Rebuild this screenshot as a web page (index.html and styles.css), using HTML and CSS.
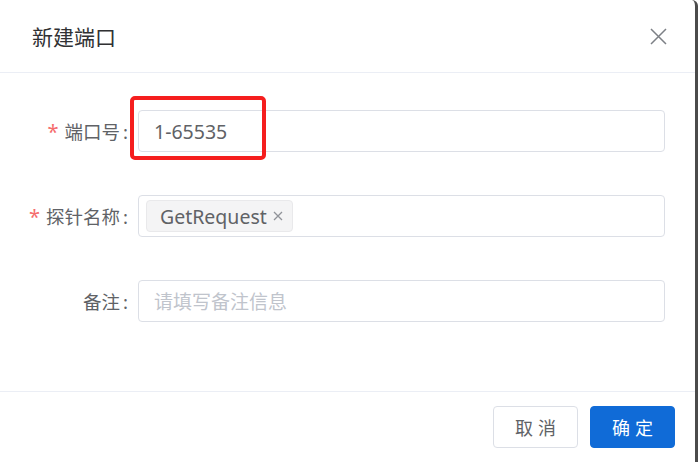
FILE: index.html
```html
<!DOCTYPE html>
<html>
  <head>
    <meta charset="utf-8">
    <title>新建端口</title>
    <link rel="stylesheet" href="styles.css">
  </head>
  <body>
    <div class="dialog">
      <div class="dialog-header">
        <span class="dialog-title">新建端口</span>
        <span class="dialog-close">
          <svg width="17" height="17" viewBox="0 0 17 17">
            <path d="M1 1 L16 16 M16 1 L1 16" stroke="#7d8086" stroke-width="1.5" fill="none"/>
          </svg>
        </span>
      </div>

      <div class="dialog-body">
        <div class="form-item">
          <label class="form-label"><span class="required">*</span>端口号<span class="colon">:</span></label>
          <div class="form-control">
            <div class="input">1-65535</div>
            <div class="highlight"></div>
          </div>
        </div>

        <div class="form-item">
          <label class="form-label"><span class="required">*</span>探针名称<span class="colon">:</span></label>
          <div class="form-control">
            <div class="input input-tags">
              <span class="tag">GetRequest
                <svg class="tag-close" width="10" height="10" viewBox="0 0 10 10">
                  <path d="M1 1 L9 9 M9 1 L1 9" stroke="#909399" stroke-width="1.3" fill="none"/>
                </svg>
              </span>
            </div>
          </div>
        </div>

        <div class="form-item">
          <label class="form-label">备注<span class="colon">:</span></label>
          <div class="form-control">
            <div class="input placeholder">请填写备注信息</div>
          </div>
        </div>
      </div>

      <div class="dialog-footer">
        <button class="btn">取消</button>
        <button class="btn btn-primary">确定</button>
      </div>
    </div>
  </body>
</html>
```

FILE: styles.css
```css
html,
body {
  margin: 0;
  padding: 0;
  background: #fff;
}

body {
  font-family: "Noto Sans", "Noto Sans CJK SC", sans-serif;
  color: #606266;
  height: 462px;
  overflow: hidden;
}

.dialog {
  width: 698px;
  height: 462px;
  background: #fff;
  border-right: 3px solid #4b4b4b;
  border-top-right-radius: 6px;
  box-sizing: border-box;
  display: flex;
  flex-direction: column;
}

.dialog-header {
  height: 72px;
  display: flex;
  align-items: center;
  justify-content: space-between;
  padding: 0 28px 0 32px;
  border-bottom: 1px solid #ebeef5;
}

.dialog-title {
  font-size: 21px;
  color: #303133;
}

.dialog-close {
  display: flex;
}

.dialog-body {
  flex: 1;
  padding: 37px 30px 0 0;
}

.form-item {
  display: flex;
  align-items: center;
  margin-bottom: 43px;
}

.form-label {
  width: 128px;
  padding-right: 10px;
  text-align: right;
  font-size: 18.5px;
  color: #606266;
}

.colon {
  margin-left: 3px;
}

.required {
  color: #f56c6c;
  margin-right: 6px;
  font-size: 20px;
}

.form-control {
  flex: 1;
  position: relative;
}

.input {
  height: 42px;
  box-sizing: border-box;
  border: 1px solid #dcdfe6;
  border-radius: 4px;
  padding: 0 15px;
  display: flex;
  align-items: center;
  font-size: 19.5px;
  color: #606266;
}

.placeholder {
  font-size: 19px;
  color: #c0c4cc;
}

.input-tags {
  padding: 0 7px;
}

.tag {
  height: 32px;
  box-sizing: border-box;
  display: inline-flex;
  align-items: center;
  padding: 0 9px 0 13px;
  background: #f4f4f5;
  border: 1px solid #e9e9eb;
  border-radius: 4px;
  font-size: 19.5px;
  color: #606266;
}

.tag-close {
  margin-left: 6px;
}

.highlight {
  position: absolute;
  left: -8px;
  top: -14px;
  width: 136px;
  height: 64px;
  box-sizing: border-box;
  border: 4px solid #f51e1e;
  border-radius: 5px;
}

.dialog-footer {
  border-top: 1px solid #ebeef5;
  height: 71px;
  display: flex;
  justify-content: flex-end;
  align-items: flex-start;
  gap: 12px;
  padding: 14px 20px 0 0;
  box-sizing: border-box;
}

.btn {
  width: 85px;
  height: 42px;
  border: 1px solid #dcdfe6;
  border-radius: 4px;
  background: #fff;
  color: #606266;
  font-family: inherit;
  font-size: 18px;
  letter-spacing: 5px;
  padding: 0 0 0 5px;
}

.btn-primary {
  background: #106bd7;
  border-color: #106bd7;
  color: #fff;
}
```
